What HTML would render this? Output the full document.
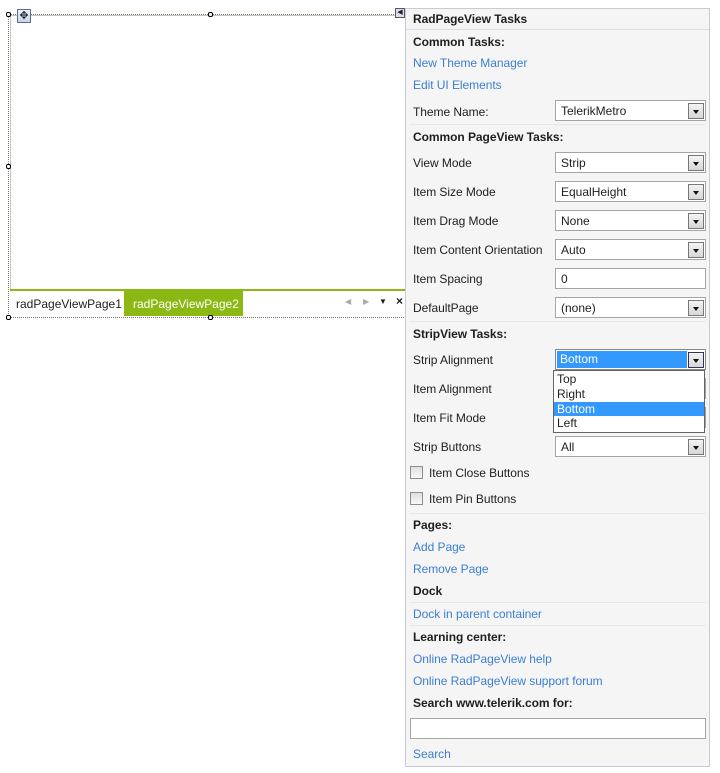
<!DOCTYPE html>
<html><head><style>
*{margin:0;padding:0;box-sizing:border-box}
body{width:720px;height:773px;background:#fff;position:relative;overflow:hidden;font-family:"Liberation Sans",sans-serif;font-size:12px;color:#1e1e1e}
.a{position:absolute;white-space:nowrap}
.l{position:absolute;left:413px;line-height:14px;white-space:nowrap;margin-top:1px;letter-spacing:-0.05px}
.b{font-weight:bold}
.k{color:#3c7fd0}
.c{position:absolute;left:555px;width:151px;height:21px;border:1px solid #a5a5a5;background:#fff;padding:3px 0 0 5px;line-height:14px}
.c i{position:absolute;right:1px;top:2px;width:16px;height:16px;border:1px solid #777;background:linear-gradient(#f4f4f4,#d6d6d6)}
.c i:after{content:"";position:absolute;left:4px;top:6px;border-left:3px solid transparent;border-right:3px solid transparent;border-top:4px solid #111}
.sep{position:absolute;left:410px;width:296px;height:1px;background:#e6e6e6}
.h{position:absolute;width:5px;height:5px;border:1px solid #000;border-radius:2px;background:#fff}
.cb{position:absolute;left:410px;width:13px;height:13px;border:1px solid #8e8e8e;background:linear-gradient(#e0e0e0,#f8f8f8)}
</style></head><body>
<div class="a" style="left:8px;top:14px;width:398px;height:304px;border:1px dotted #777"></div>
<div class="a" style="left:10px;top:15px;width:395px;height:1px;background:#c8c8b8"></div>
<div class="a" style="left:10px;top:15px;width:1px;height:276px;background:#c8c8b8"></div>
<div class="a" style="left:10px;top:289px;width:395px;height:2px;background:#8cb814"></div>
<div class="a" style="left:10px;top:291px;width:114px;height:25px;background:#fff;padding:6px 0 0 6px">radPageViewPage1</div>
<div class="a" style="left:124px;top:291px;width:119px;height:25px;background:#8cb814;color:#fff;padding:6px 0 0 9px">radPageViewPage2</div>
<div class="a" style="left:345px;top:297px;font-size:8px;color:#aaa">◀</div>
<div class="a" style="left:363px;top:297px;font-size:8px;color:#aaa">▶</div>
<div class="a" style="left:379px;top:297px;font-size:8px">▼</div>
<div class="a" style="left:396px;top:294px;font-size:12px;font-weight:bold">×</div>
<div class="h" style="left:6px;top:12px"></div>
<div class="h" style="left:208px;top:12px"></div>
<div class="h" style="left:6px;top:164px"></div>
<div class="h" style="left:6px;top:315px"></div>
<div class="h" style="left:208px;top:315px"></div>
<div class="a" style="left:17px;top:9px;width:14px;height:14px;border:1px solid #5a6e8c;background:linear-gradient(#eef2fa,#c8d4ea);font-size:11px;line-height:12px;text-align:center;color:#223">✥</div>
<div class="a" style="left:395px;top:8px;width:10px;height:10px;border:1px solid #556;background:#dde;font-size:7px;line-height:8px;text-align:center">◀</div>
<div class="a" style="left:405px;top:8px;width:305px;height:759px;background:#f5f5f6;border:1px solid #c9c9d8"></div>
<div class="sep" style="top:29px;left:406px;width:303px;background:#dcdce4"></div>
<div class="l b" style="top:11px">RadPageView Tasks</div>
<div class="l b" style="top:34px">Common Tasks:</div>
<div class="l k" style="top:55px">New Theme Manager</div>
<div class="l k" style="top:77px">Edit UI Elements</div>
<div class="l" style="top:104px">Theme Name:</div>
<div class="c" style="top:100px">TelerikMetro<i></i></div>
<div class="sep" style="top:124px"></div>
<div class="l b" style="top:129px">Common PageView Tasks:</div>
<div class="l" style="top:155px">View Mode</div>
<div class="c" style="top:152px">Strip<i></i></div>
<div class="l" style="top:184px">Item Size Mode</div>
<div class="c" style="top:181px">EqualHeight<i></i></div>
<div class="l" style="top:213px">Item Drag Mode</div>
<div class="c" style="top:210px">None<i></i></div>
<div class="l" style="top:242px">Item Content Orientation</div>
<div class="c" style="top:239px">Auto<i></i></div>
<div class="l" style="top:271px">Item Spacing</div>
<div class="c" style="top:268px">0</div>
<div class="l" style="top:300px">DefaultPage</div>
<div class="c" style="top:297px">(none)<i></i></div>
<div class="sep" style="top:321px"></div>
<div class="l b" style="top:326px">StripView Tasks:</div>
<div class="l" style="top:352px">Strip Alignment</div>
<div class="c" style="top:349px;border-color:#888;padding:0"><div class="a" style="left:1px;top:1px;width:130px;height:17px;background:#3399ff;color:#fff;padding:1px 0 0 3px">Bottom</div><i style="border-color:#335"></i></div>
<div class="l" style="top:381px">Item Alignment</div>
<div class="c" style="top:378px"><i></i></div>
<div class="l" style="top:410px">Item Fit Mode</div>
<div class="c" style="top:407px"><i></i></div>
<div class="a" style="left:553px;top:370px;width:152px;height:63px;background:#fff;border:1px solid #646464;line-height:14.8px">
<div style="padding-left:3px;margin-top:1px">Top</div>
<div style="padding-left:3px">Right</div>
<div style="padding-left:3px;background:#3399ff;color:#fff">Bottom</div>
<div style="padding-left:3px">Left</div>
</div>
<div class="l" style="top:439px">Strip Buttons</div>
<div class="c" style="top:436px">All<i></i></div>
<div class="cb" style="top:466px"></div>
<div class="l" style="left:429px;top:465px">Item Close Buttons</div>
<div class="cb" style="top:492px"></div>
<div class="l" style="left:429px;top:491px">Item Pin Buttons</div>
<div class="sep" style="top:513px"></div>
<div class="l b" style="top:517px">Pages:</div>
<div class="l k" style="top:539px">Add Page</div>
<div class="l k" style="top:561px">Remove Page</div>
<div class="l b" style="top:583px">Dock</div>
<div class="sep" style="top:602px"></div>
<div class="l k" style="top:606px">Dock in parent container</div>
<div class="sep" style="top:625px"></div>
<div class="l b" style="top:629px">Learning center:</div>
<div class="l k" style="top:651px">Online RadPageView help</div>
<div class="l k" style="top:673px">Online RadPageView support forum</div>
<div class="l b" style="top:695px">Search www.telerik.com for:</div>
<div class="a" style="left:410px;top:718px;width:296px;height:21px;border:1px solid #a5a5a5;background:#fff"></div>
<div class="l k" style="top:746px">Search</div>
</body></html>
